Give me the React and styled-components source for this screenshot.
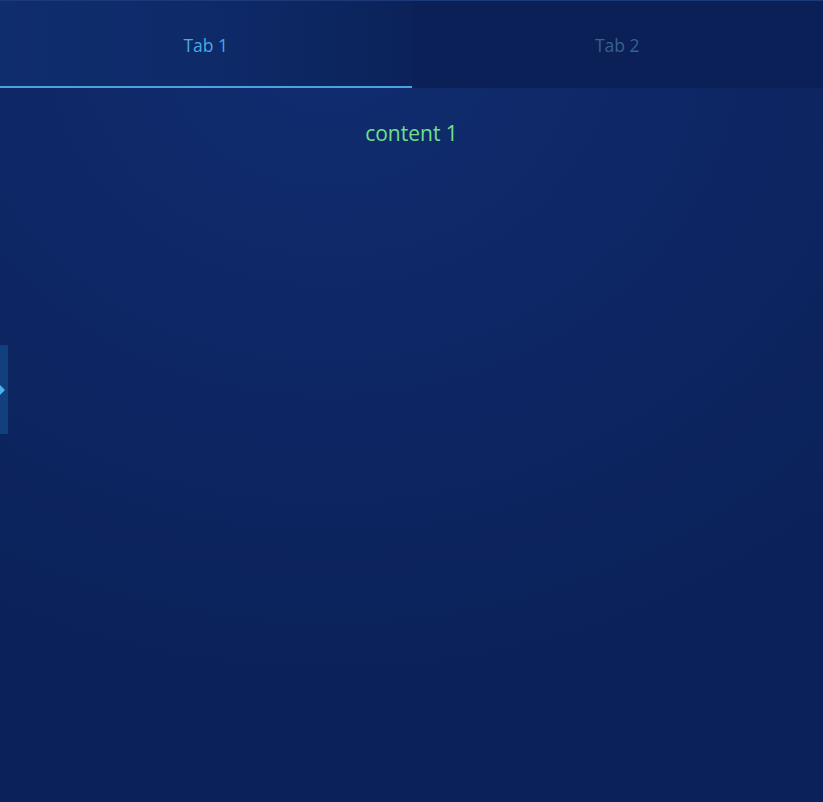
import React, { useState } from "react";
import styled, { createGlobalStyle } from "styled-components";

const GlobalStyle = createGlobalStyle`
  html, body {
    margin: 0;
    padding: 0;
    height: 100%;
  }
  body {
    font-family: "Open Sans", "Noto Sans", sans-serif;
    background: #0b2258;
  }
  #root {
    height: 100%;
  }
`;

const Page = styled.div`
  position: relative;
  height: 802px;
  display: flex;
  flex-direction: column;
  background: radial-gradient(ellipse 90% 80% at 40% 5%, #112d70 0%, #0e2766 45%, #0b2259 100%);
  border-top: 1px solid #1c3a78;
  box-sizing: border-box;
  overflow: hidden;
`;

const TabBar = styled.div`
  display: flex;
  height: 87px;
  flex-shrink: 0;
`;

const Tab = styled.button`
  flex: 1;
  border: none;
  margin: 0;
  padding: 3px 0 0;
  cursor: pointer;
  font-family: inherit;
  font-size: 17.5px;
  color: ${(p) => (p.active ? "#4aa9e2" : "#38618f")};
  background: ${(p) =>
    p.active
      ? "linear-gradient(90deg, #0f2c6c 0%, #0e2a69 50%, #0b2359 100%)"
      : "#0a2056"};
  border-bottom: 2px solid ${(p) => (p.active ? "#4aa3df" : "transparent")};
  display: flex;
  align-items: center;
  justify-content: center;
  outline: none;
`;

const Panel = styled.div`
  flex: 1;
  display: flex;
  justify-content: center;
  padding-top: 31px;
`;

const Content = styled.div`
  font-size: 21px;
  color: #6ee08a;
  line-height: 28px;
`;

const Handle = styled.div`
  position: absolute;
  left: 0;
  top: 344px;
  width: 8px;
  height: 89px;
  background: #123f7e;
  display: flex;
  align-items: center;
`;

const Arrow = styled.div`
  width: 0;
  height: 0;
  border-top: 5px solid transparent;
  border-bottom: 5px solid transparent;
  border-left: 5px solid #4fb2ec;
`;

export default function App() {
  const [tab, setTab] = useState(0);
  return (
    <>
      <GlobalStyle />
      <Page>
        <TabBar>
          <Tab active={tab === 0} onClick={() => setTab(0)}>
            Tab 1
          </Tab>
          <Tab active={tab === 1} onClick={() => setTab(1)}>
            Tab 2
          </Tab>
        </TabBar>
        <Panel>
          <Content>{tab === 0 ? "content 1" : "content 2"}</Content>
        </Panel>
        <Handle>
          <Arrow />
        </Handle>
      </Page>
    </>
  );
}
